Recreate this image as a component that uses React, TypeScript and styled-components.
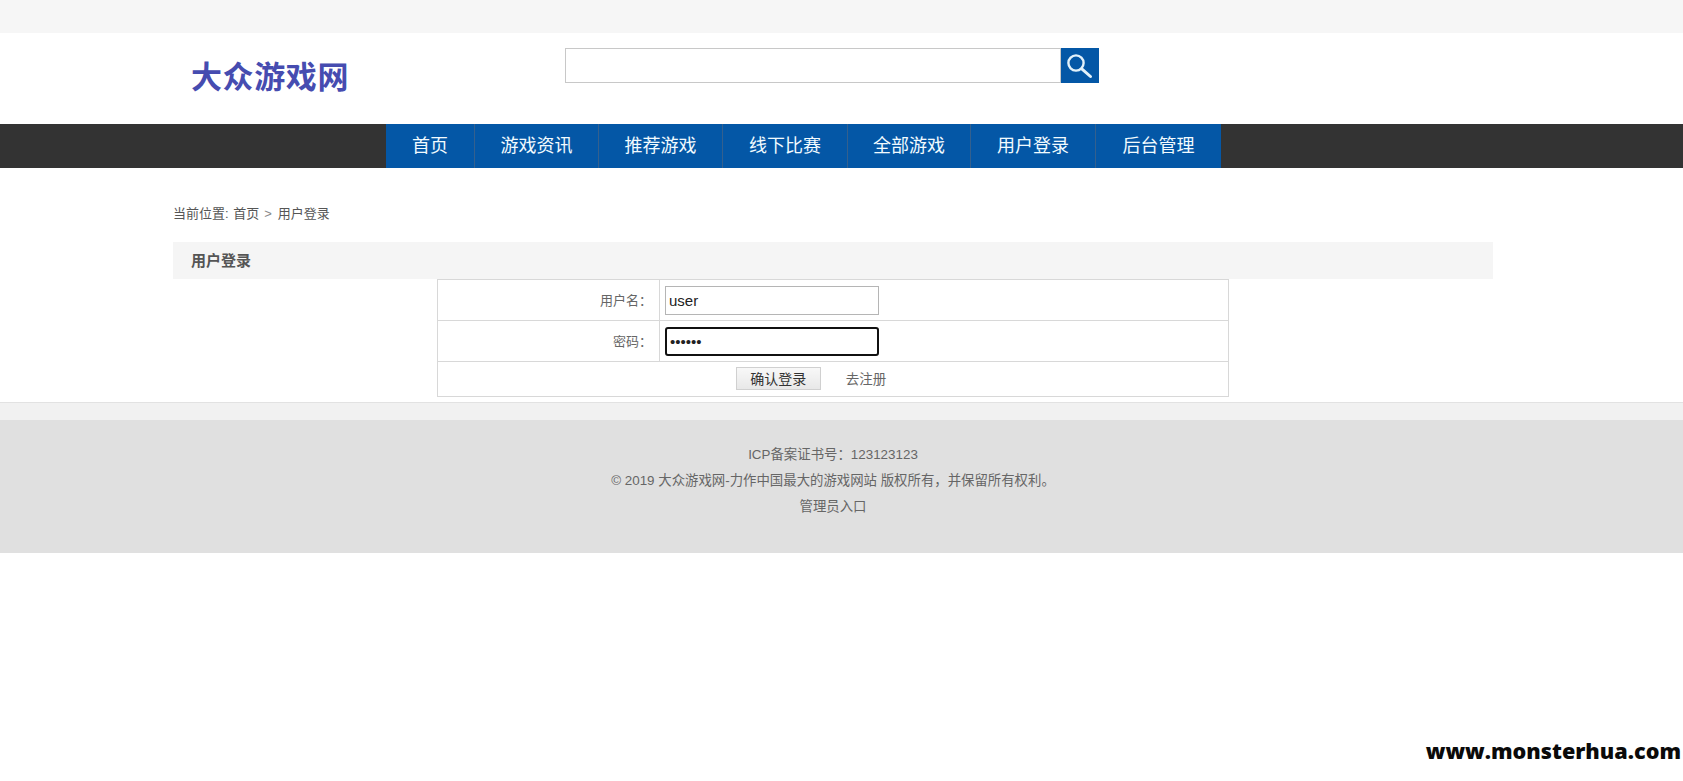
import React from "react";
import styled, { createGlobalStyle } from "styled-components";

const Global = createGlobalStyle`
  html, body { margin: 0; padding: 0; background: #fff; }
  body { font-family: "Liberation Sans", "Noto Sans CJK SC", sans-serif; font-size: 14px; color: #555; }
`;
const Page = styled.div`
  width: 1683px;
  min-height: 781px;
  position: relative;
  overflow: hidden;
`;
const TopBar = styled.div`
  height: 33px;
  background: #f6f6f6;
`;
const Header = styled.header`
  height: 91px;
  display: flex;
  align-items: flex-start;
`;
const Logo = styled.div`
  width: 565px;
  padding: 20px 0 0 191px;
  box-sizing: border-box;
  font: bold 31px/1.4 "Noto Sans CJK SC", sans-serif;
  letter-spacing: 0.6px;
  color: #464cb0;
  white-space: nowrap;
  flex: none;
`;
const Search = styled.form`
  display: flex;
  margin-top: 15px;
`;
const SearchInput = styled.input`
  width: 496px;
  height: 35px;
  box-sizing: border-box;
  border: 1px solid #c8c8c8;
  outline: none;
  background: #fff;
  padding: 0;
`;
const SearchButton = styled.button`
  width: 38px;
  height: 35px;
  border: 0;
  padding: 0;
  background: #0457a6;
  display: block;
`;
const SearchIcon = styled.svg`
  display: block;
`;
const NavBar = styled.nav`
  height: 44px;
  background: #333;
  padding-left: 386px;
  display: flex;
`;
const NavItem = styled.a<{ $w: number; $last?: boolean }>`
  width: ${(p) => p.$w}px;
  box-sizing: border-box;
  background: #0457a6;
  color: #f2fbff;
  font-size: 18px;
  line-height: 44px;
  text-align: center;
  border-right: ${(p) => (p.$last ? "0" : "1px solid #34608e")};
`;
const Main = styled.main`
  width: 1320px;
  margin-left: 173px;
`;
const Crumbs = styled.div`
  padding-top: 36px;
  height: 38px;
  line-height: 20px;
  font-size: 13px;
  color: #555;
  word-spacing: 1px;
`;
const Chevron = styled.span`
  margin: 0 6px 0 5px;
  color: #888;
  font-family: "Liberation Sans", sans-serif;
`;
const PanelTitle = styled.h2`
  margin: 0;
  height: 37px;
  padding-left: 18px;
  background: #f5f5f5;
  font-size: 15px;
  font-weight: bold;
  line-height: 37px;
  color: #555;
`;
const Table = styled.table`
  width: 792px;
  margin-left: 264px;
  border-collapse: collapse;
  table-layout: fixed;
`;
const Row = styled.tr<{ $h: number }>`
  height: ${(p) => p.$h}px;
`;
const LabelCell = styled.td`
  width: 222px;
  box-sizing: border-box;
  border: 1px solid #d8d8d8;
  padding: 0 7px 2px 0;
  text-align: right;
  font-size: 13px;
  color: #666;
`;
const FieldCell = styled.td`
  border: 1px solid #d8d8d8;
  padding: 0 0 0 5px;
`;
const ActionCell = styled.td`
  border: 1px solid #d8d8d8;
  padding: 0 44px 2px 0;
  text-align: center;
  font-size: 13.5px;
`;
const Field = styled.input<{ $focus?: boolean }>`
  display: block;
  width: 214px;
  height: 29px;
  box-sizing: border-box;
  padding: 0 3px;
  outline: none;
  background: #fff;
  font-family: "Liberation Sans", sans-serif;
  font-size: 15px;
  color: #222;
  border: ${(p) => (p.$focus ? "2px solid #111" : "1px solid #b5b5b5")};
  border-radius: ${(p) => (p.$focus ? "3px" : "0")};
`;
const Submit = styled.button`
  width: 85px;
  height: 23px;
  padding: 0;
  box-sizing: border-box;
  border: 1px solid #d0d0d0;
  background: linear-gradient(#f8f8f8, #e8e8e8);
  font: 14px "Liberation Sans", "Noto Sans CJK SC", sans-serif;
  color: #333;
  vertical-align: middle;
`;
const RegisterLink = styled.a`
  margin-left: 25px;
  color: #666;
  vertical-align: middle;
`;
const Footer = styled.footer`
  margin-top: 5px;
`;
const FooterBand = styled.div`
  height: 17px;
  background: #f1f1f1;
  border-top: 1px solid #e2e2e2;
`;
const FooterBody = styled.div`
  width: 1666px;
  height: 133px;
  box-sizing: border-box;
  padding-top: 22px;
  background: #e0e0e0;
  box-shadow: 17px 0 0 #e0e0e0;
  text-align: center;
  font-size: 13.4px;
  line-height: 26px;
  color: #666;
`;
const Watermark = styled.div`
  position: absolute;
  right: 2px;
  top: 737px;
  font: 800 21.6px/28px "Open Sans", sans-serif;
  color: #0a0a0a;
`;

const items: [string, number][] = [
  ["首页", 89], ["游戏资讯", 124], ["推荐游戏", 124], ["线下比赛", 125],
  ["全部游戏", 123], ["用户登录", 125], ["后台管理", 125],
];

export default function App() {
  return (
    <Page>
      <Global />
      <TopBar />
      <Header>
        <Logo>大众游戏网</Logo>
        <Search>
          <SearchInput />
          <SearchButton type="button" aria-label="搜索">
            <SearchIcon width="38" height="35" viewBox="0 0 38 35" fill="none" stroke="#e2f1fa">
              <circle cx="15" cy="15" r="7.6" strokeWidth="2.4" />
              <path d="M20.8 20.8l8.7 7.7" strokeWidth="3" strokeLinecap="round" />
            </SearchIcon>
          </SearchButton>
        </Search>
      </Header>
      <NavBar>
        {items.map(([t, w], i) => (
          <NavItem key={t} $w={w} $last={i === items.length - 1}>{t}</NavItem>
        ))}
      </NavBar>
      <Main>
        <Crumbs>当前位置: 首页<Chevron>&gt;</Chevron>用户登录</Crumbs>
        <PanelTitle>用户登录</PanelTitle>
        <Table>
          <tbody>
            <Row $h={41}>
              <LabelCell>用户名：</LabelCell>
              <FieldCell><Field defaultValue="user" /></FieldCell>
            </Row>
            <Row $h={41}>
              <LabelCell>密码：</LabelCell>
              <FieldCell><Field $focus type="password" defaultValue="123456" /></FieldCell>
            </Row>
            <Row $h={35}>
              <ActionCell colSpan={2}>
                <Submit type="button">确认登录</Submit>
                <RegisterLink>去注册</RegisterLink>
              </ActionCell>
            </Row>
          </tbody>
        </Table>
      </Main>
      <Footer>
        <FooterBand />
        <FooterBody>
          <div>ICP备案证书号：123123123</div>
          <div>© 2019 大众游戏网-力作中国最大的游戏网站 版权所有，并保留所有权利。</div>
          <div>管理员入口</div>
        </FooterBody>
      </Footer>
      <Watermark>www.monsterhua.com</Watermark>
    </Page>
  );
}
